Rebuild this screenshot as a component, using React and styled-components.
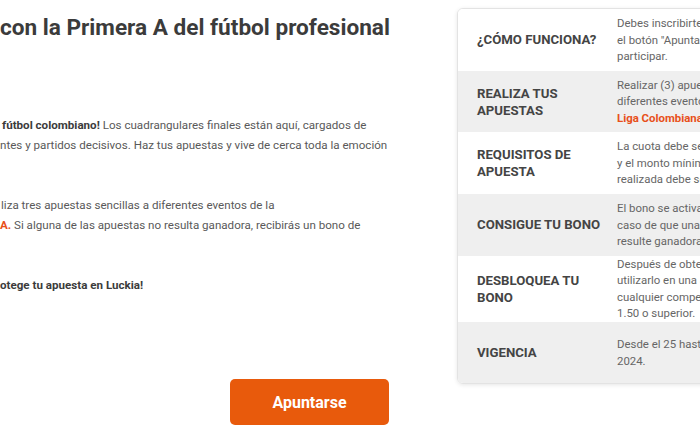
import React from "react";
import styled, { createGlobalStyle } from "styled-components";

const GlobalStyle = createGlobalStyle`
  html, body {
    margin: 0;
    padding: 0;
    background: #ffffff;
    overflow: hidden;
  }
  body {
    font-family: Roboto, "Liberation Sans", Arial, sans-serif;
  }
`;

const rows = [
  {
    label: "¿CÓMO FUNCIONA?",
    lines: [
      "Debes inscribirte en la promoción dando clic en",
      'el botón "Apuntarse" para poder',
      "participar.",
    ],
  },
  {
    label: "REALIZA TUS APUESTAS",
    lines: ["Realizar (3) apuestas sencillas a", "diferentes eventos de la"],
    highlight: "Liga Colombiana Primera A.",
  },
  {
    label: "REQUISITOS DE APUESTA",
    lines: [
      "La cuota debe ser igual o mayor a 1.50",
      "y el monto mínimo de cada apuesta",
      "realizada debe ser de $20.000.",
    ],
  },
  {
    label: "CONSIGUE TU BONO",
    lines: [
      "El bono se activará automáticamente en",
      "caso de que una de tus apuestas no",
      "resulte ganadora.",
    ],
  },
  {
    label: "DESBLOQUEA TU BONO",
    lines: [
      "Después de obtener el bono, debes",
      "utilizarlo en una apuesta sencilla en",
      "cualquier competición con cuota de",
      "1.50 o superior.",
    ],
  },
  {
    label: "VIGENCIA",
    lines: ["Desde el 25 hasta el 30 de noviembre de", "2024."],
  },
];

export default function App() {
  return (
    <>
      <GlobalStyle />
      <Page>
        <Intro>
          <Title>con la Primera A del fútbol profesional</Title>
          <Paragraph>
            <Line $indent={2}>
              <Strong>fútbol colombiano!</Strong> Los cuadrangulares finales
              están aquí, cargados de
            </Line>
            <Line>
              ntes y partidos decisivos. Haz tus apuestas y vive de cerca toda
              la emoción
            </Line>
          </Paragraph>
          <Paragraph>
            <Line $indent={1}>
              liza tres apuestas sencillas a diferentes eventos de la
            </Line>
            <Line>
              <Accent>A.</Accent> Si alguna de las apuestas no resulta
              ganadora, recibirás un bono de
            </Line>
          </Paragraph>
          <Paragraph>
            <Line>
              <Strong>otege tu apuesta en Luckia!</Strong>
            </Line>
          </Paragraph>
          <ButtonRow>
            <JoinButton>Apuntarse</JoinButton>
          </ButtonRow>
        </Intro>

        <InfoTable>
          {rows.map((row, i) => (
            <InfoRow key={row.label} $shaded={i % 2 === 1}>
              <Label>{row.label}</Label>
              <Value>
                {row.lines.map((l) => (
                  <ValueLine key={l}>{l}</ValueLine>
                ))}
                {row.highlight && (
                  <ValueLine>
                    <Accent>{row.highlight}</Accent>
                  </ValueLine>
                )}
              </Value>
            </InfoRow>
          ))}
        </InfoTable>
      </Page>
    </>
  );
}

const Page = styled.div`
  display: flex;
  align-items: flex-start;
  gap: 57px;
  width: 900px;
  padding-top: 8px;
`;

const Intro = styled.div`
  width: 400px;
  flex-shrink: 0;
  padding-top: 6px;
  box-sizing: border-box;
`;

const Title = styled.h1`
  margin: 0 0 73px;
  font-size: 22.6px;
  line-height: 28px;
  font-weight: 700;
  color: #3b3b3b;
  white-space: nowrap;
`;

const Paragraph = styled.div`
  margin-bottom: 40px;
  font-size: 11.6px;
  line-height: 20px;
  color: #595959;
`;

const Line = styled.div`
  white-space: nowrap;
  padding-left: ${(p) => p.$indent || 0}px;
`;

const Strong = styled.strong`
  font-weight: 700;
  color: #3b3b3b;
`;

const Accent = styled.strong`
  font-weight: 700;
  color: #e8501a;
`;

const ButtonRow = styled.div`
  display: flex;
  justify-content: flex-end;
  padding-right: 11px;
  margin-top: 84px;
`;

const JoinButton = styled.button`
  width: 159px;
  height: 46px;
  border: none;
  border-radius: 5px;
  background: #e85a0c;
  color: #ffffff;
  font-family: Roboto, "Liberation Sans", Arial, sans-serif;
  font-size: 16px;
  font-weight: 700;
  cursor: pointer;
`;

const InfoTable = styled.div`
  width: 430px;
  flex-shrink: 0;
  border: 1px solid #e3e3e3;
  border-radius: 6px;
  overflow: hidden;
  box-shadow: 0 1px 4px rgba(0, 0, 0, 0.1);
`;

const InfoRow = styled.div`
  display: grid;
  grid-template-columns: 159px 1fr;
  align-items: center;
  min-height: 61.7px;
  background: ${(p) => (p.$shaded ? "#efefef" : "#ffffff")};
`;

const Label = styled.div`
  padding: 0 10px 0 19px;
  font-size: 13.2px;
  line-height: 17px;
  font-weight: 700;
  color: #444444;
`;

const Value = styled.div`
  font-size: 11.4px;
  line-height: 16.5px;
  color: #666666;
`;

const ValueLine = styled.div`
  white-space: nowrap;
`;
